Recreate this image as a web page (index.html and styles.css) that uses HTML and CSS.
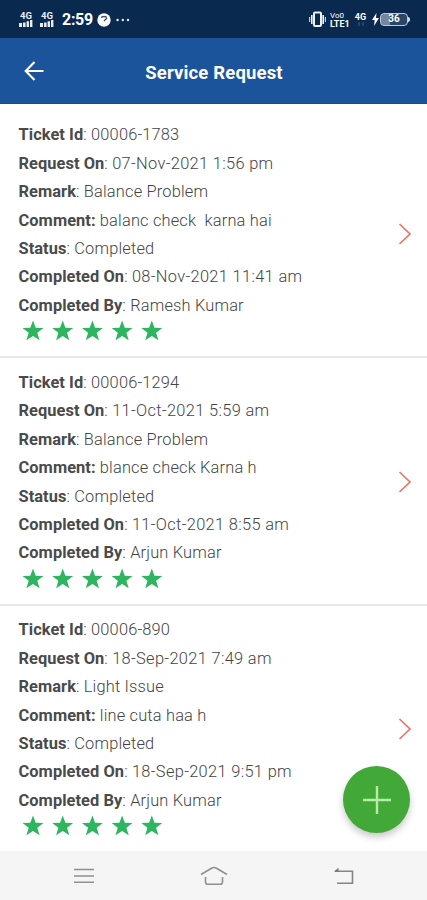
FILE: index.html
```html
<!DOCTYPE html>
<html lang="en">
<head>
<meta charset="utf-8">
<title>Service Request</title>
<link rel="stylesheet" href="styles.css">
</head>
<body>
<svg class="defs" width="0" height="0">
  <symbol id="stars" viewBox="0 0 142 22">
    <g id="five">
      <path id="star" d="M11 .5l2.700 7.300 7.800.2-6.200 4.700 2.300 7.600L11 15.900l-6.600 4.400 2.300-7.600L.5 8l7.800-.2z"/>
      <use href="#star" x="29.7"/><use href="#star" x="59.4"/><use href="#star" x="89.1"/><use href="#star" x="118.8"/>
    </g>
  </symbol>
  <symbol id="chevron" viewBox="0 0 14 24"><path d="M1.5 2L12 12 1.5 22" fill="none" stroke="currentColor" stroke-width="1.7"/></symbol>
  <symbol id="bars" viewBox="0 0 14 7"><path d="M0 3h3v4H0zM4 2.5h2.6V7H4zM7.6 1.2h2.4V7H7.6zM11 0h2.4v7H11z" fill="currentColor"/></symbol>
</svg>
<div class="screen">
  <header class="status">
    <div class="group">
      <div class="signal"><span>4G</span><svg width="14" height="7"><use href="#bars"/></svg></div>
      <div class="signal second"><span>4G</span><svg width="14" height="7"><use href="#bars"/></svg></div>
      <span class="time">2:59</span>
      <svg class="clock" width="14" height="14" viewBox="0 0 14 14"><circle cx="7" cy="7" r="6.7" fill="#fff"/><path d="M4 4.500Q7 2.500 10 4.500M10 5L7 8" fill="none" stroke="#3c4e68" stroke-width="1.3"/></svg>
      <svg class="dots" width="14" height="4" viewBox="0 0 14 4" fill="#e4eaf2"><circle cx="1.6" cy="2" r="1.2"/><circle cx="6.8" cy="2" r="1.2"/><circle cx="12" cy="2" r="1.2"/></svg>
    </div>
    <div class="group right">
      <svg width="17" height="17" viewBox="0 0 17 17" fill="none" stroke="#edf2f7"><rect x="5" y="1.5" width="7" height="13.5" rx="1" stroke-width="2"/><path d="M2.8 4v9M14.2 4v9" stroke-width="1.6"/><path d="M.7 6v5M16.3 6v5" stroke-width="1"/></svg>
      <div class="lte"><span>Vo0</span><b>LTE1</b></div>
      <div class="net"><span>4G</span><svg width="8" height="4" viewBox="0 0 8 4"><path d="M2 0v4M6 0v4" stroke="#4b6384"/></svg></div>
      <svg class="bolt" width="7" height="13" viewBox="0 0 7 13"><path d="M4.5 0L0 7h2.7L2 13l5-8H4z" fill="#fff"/></svg>
      <div class="battery">36</div><i class="tip"></i>
    </div>
  </header>
  <div class="appbar">
    <svg class="back" width="20" height="20" viewBox="0 0 20 20" fill="none" stroke="#fff" stroke-width="2.1"><path d="M19.5 10H2M10.500 1L1.700 10l8.800 9"/></svg>
    <h1>Service Request</h1>
  </div>
  <main class="list">
    <article class="card">
      <div class="info">
        <p><b>Ticket Id</b>: 00006-1783</p>
        <p><b>Request On</b>: <span class="date">07-Nov-2021 1:56 pm</span></p>
        <p><b>Remark</b>: Balance Problem</p>
        <p><b>Comment:</b> balanc check&nbsp; karna hai</p>
        <p><b>Status</b>: Completed</p>
        <p><b>Completed On</b>: <span class="date">08-Nov-2021 11:41 am</span></p>
        <p><b>Completed By</b>: Ramesh Kumar</p>
        <svg class="stars"><use href="#stars"/></svg>
      </div>
      <svg class="chevron"><use href="#chevron"/></svg>
    </article>
    <article class="card">
      <div class="info">
        <p><b>Ticket Id</b>: 00006-1294</p>
        <p><b>Request On</b>: <span class="date">11-Oct-2021 5:59 am</span></p>
        <p><b>Remark</b>: Balance Problem</p>
        <p><b>Comment:</b> blance check Karna h</p>
        <p><b>Status</b>: Completed</p>
        <p><b>Completed On</b>: <span class="date">11-Oct-2021 8:55 am</span></p>
        <p><b>Completed By</b>: Arjun Kumar</p>
        <svg class="stars"><use href="#stars"/></svg>
      </div>
      <svg class="chevron"><use href="#chevron"/></svg>
    </article>
    <article class="card">
      <div class="info">
        <p><b>Ticket Id</b>: 00006-890</p>
        <p><b>Request On</b>: <span class="date">18-Sep-2021 7:49 am</span></p>
        <p><b>Remark</b>: Light Issue</p>
        <p><b>Comment:</b> line cuta haa h</p>
        <p><b>Status</b>: Completed</p>
        <p><b>Completed On</b>: <span class="date">18-Sep-2021 9:51 pm</span></p>
        <p><b>Completed By</b>: Arjun Kumar</p>
        <svg class="stars"><use href="#stars"/></svg>
      </div>
      <svg class="chevron"><use href="#chevron"/></svg>
    </article>
  </main>
  <div class="fab"><svg width="30" height="30" viewBox="0 0 30 30"><path d="M15 1v28M1 15h28" stroke="#b9eaa8" stroke-width="2.4"/></svg></div>
  <nav class="nav">
    <svg width="20" height="16" viewBox="0 0 20 16" stroke="#909090" stroke-width="1.6"><path d="M0 1.5h20M0 8h20M0 14.3h20"/></svg>
    <svg width="28" height="20" viewBox="0 0 28 20" fill="none" stroke="#909090" stroke-width="1.6"><path d="M1 8.5L11.5 2.2Q14 .8 16.500 2.200L27 8.500M5.500 11v5q0 2.300 2.300 2.300h12.400q2.300 0 2.300-2.300v-5"/></svg>
    <svg width="20" height="18" viewBox="0 0 20 18" fill="none" stroke="#858585" stroke-width="1.600"><path d="M1 4.200h17.500v12H3"/><path d="M0 4.500L4.500 .8v4z" fill="#777" stroke="none"/></svg>
  </nav>
</div>
</body>
</html>
```
FILE: styles.css
```css
* { box-sizing: border-box; }
body { margin: 0; font-family: Roboto, "Liberation Sans", sans-serif; background: #fff; }
.defs { position: absolute; }
svg { display: block; flex: none; }
.screen { position: relative; width: 427px; height: 900px; overflow: hidden; display: flex; flex-direction: column; }
.status { height: 38px; flex: none; background: #09294f; color: #fff; display: flex; justify-content: space-between; padding: 1px 17px 0 19px; }
.group { display: flex; align-items: center; }
.signal { display: flex; flex-direction: column; align-items: center; width: 14px; color: #e8edf3; }
.signal span { font-size: 9.500px; line-height: 8px; font-weight: 700; }
.second { margin-left: 7px; }
.time { font-size: 16px; font-weight: 700; margin-left: 8px; width: 31px; letter-spacing: -0.3px; }
.clock { margin-left: 4px; }
.dots { margin-left: 5px; }
.lte { margin-left: 4px; width: 21px; font-size: 8px; line-height: 8px; display: flex; flex-direction: column; }
.lte b { font-size: 9px; }
.net { margin-left: 3px; width: 13px; font-size: 9px; line-height: 9px; font-weight: 700; display: flex; flex-direction: column; align-items: center; }
.bolt { margin-left: 5px; }
.battery { margin-left: 1px; width: 28px; height: 13px; border: 1.500px solid #bfcbd9; border-radius: 4px; background: linear-gradient(90deg, #73869f 36%, #2b4567 36%); font-size: 10px; line-height: 10px; font-weight: 700; text-align: center; }
.tip { width: 2px; height: 5px; background: #d4dce6; border-radius: 0 2px 2px 0; }
.appbar { height: 66px; flex: none; background: #1b549b; border-bottom: 1px solid #1749a0; position: relative; display: flex; align-items: center; justify-content: center; padding: 4px 0 0 1px; }
.back { position: absolute; left: 24px; top: 23px; }
h1 { margin: 0; color: #fff; font-size: 18.500px; line-height: 24px; font-weight: 700; letter-spacing: .16px; }
.list { flex: 1; min-height: 0; overflow: hidden; padding-top: 6.500px; }
.card { height: 247.500px; border-bottom: 2.500px solid #e8e8e8; padding: 10.900px 15px 0 18.500px; display: flex; justify-content: space-between; }
.info p { margin: 0; font-size: 16.400px; line-height: 28.400px; color: #444; font-weight: 300; letter-spacing: .18px; white-space: nowrap; }
.info b { color: #4a4a4a; font-weight: 700; letter-spacing: .07px; }
.date { letter-spacing: .34px; }
.stars { width: 142px; height: 22px; margin: .100px 0 0 3.500px; fill: #2eb560; }
.chevron { width: 14px; height: 24px; margin-top: 100.700px; color: #e77468; }
.fab { position: absolute; left: 343px; top: 766px; width: 67px; height: 67px; border-radius: 50%; background: #42a838; display: flex; align-items: center; justify-content: center; box-shadow: 0 4px 7px rgba(0, 0, 0, .22); }
.nav { height: 49px; flex: none; background: #f5f5f5; display: flex; align-items: center; justify-content: space-between; padding: 0 73px 0 74px; }
```
